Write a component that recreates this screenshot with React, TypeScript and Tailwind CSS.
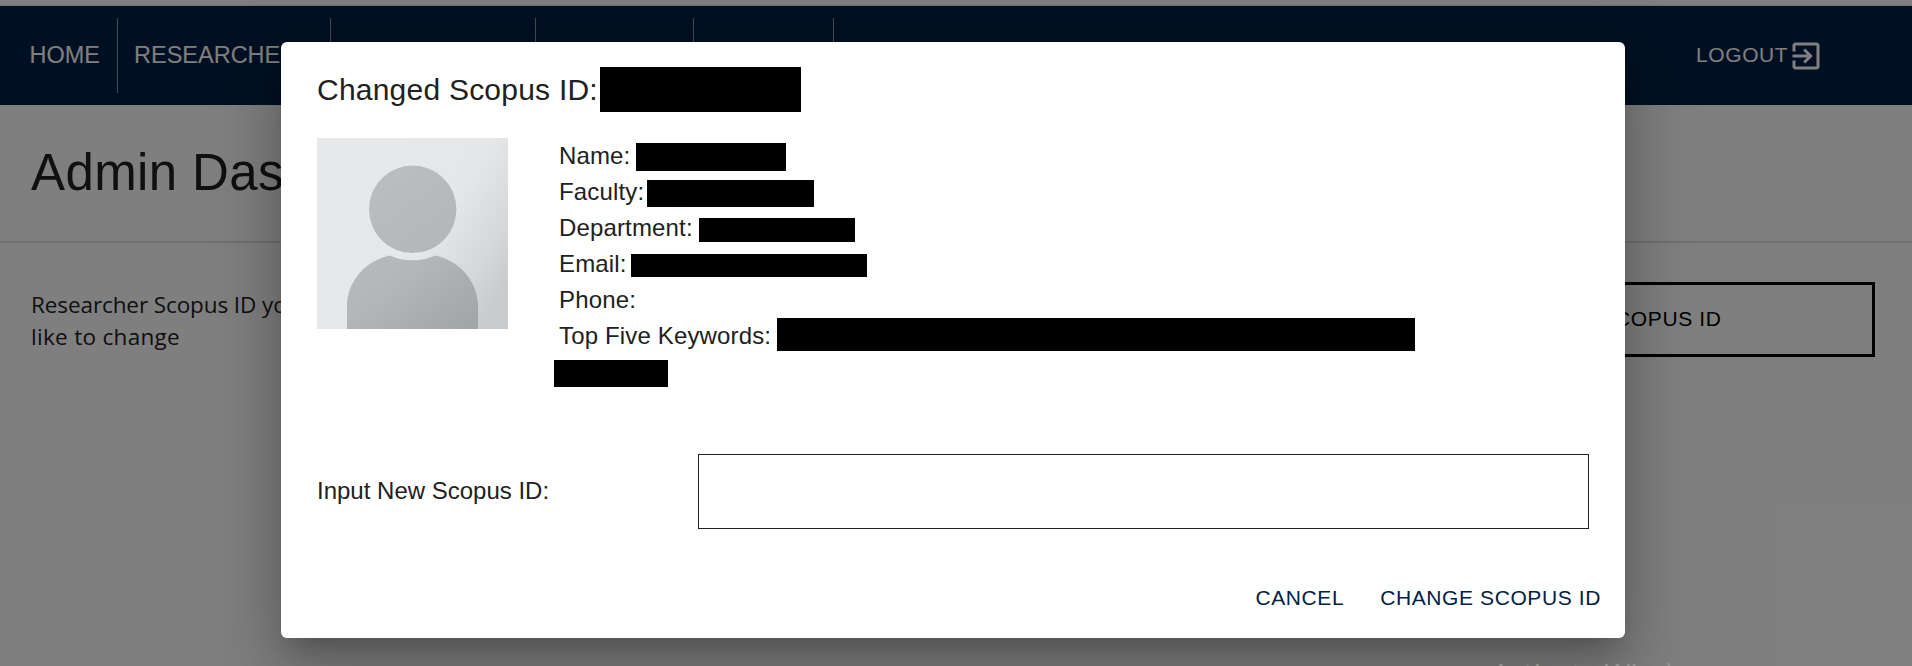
import React from "react";

const details = [
  { label: "Name:", bar: "ml-[77px] mt-[5px] h-7 w-[150px]" },
  { label: "Faculty:", bar: "ml-[88px] mt-[6px] h-[27px] w-[167px]" },
  { label: "Department:", bar: "ml-[140px] mt-2 h-6 w-[156px]" },
  { label: "Email:", bar: "ml-[72px] mt-2 h-[23px] w-[236px]" },
  { label: "Phone:", bar: "hidden" },
  { label: "Top Five Keywords:", bar: "ml-[218px] h-[33px] w-[638px]" },
  { label: "", bar: "-ml-[5px] mt-[6px] h-[27px] w-[114px]" },
];

function Avatar() {
  return (
    <svg width="191" height="191" viewBox="0 0 191 191" className="block shrink-0">
      <defs>
        <linearGradient id="bg" gradientUnits="userSpaceOnUse" x1="60" y1="40" x2="200" y2="130">
          <stop offset="0" stopColor="#e7e8ea" />
          <stop offset="0.45" stopColor="#e6e7e9" />
          <stop offset="0.8" stopColor="#d6d7d9" />
          <stop offset="1" stopColor="#cacbcc" />
        </linearGradient>
        <linearGradient id="fg" gradientUnits="userSpaceOnUse" x1="40" y1="30" x2="155" y2="180">
          <stop offset="0" stopColor="#bdbec2" />
          <stop offset="0.6" stopColor="#b5b6b9" />
          <stop offset="1" stopColor="#a2a7aa" />
        </linearGradient>
      </defs>
      <rect width="191" height="191" fill="url(#bg)" />
      <circle cx="95.7" cy="71.3" r="43.7" fill="url(#fg)" />
      <path d="M30 191V168C30 144 48 123 72.5 117.5Q95.500 127.200 118.500 117.500C143 123 161 144 161 168V191Z" fill="url(#fg)" />
    </svg>
  );
}

function Divider() {
  return <span className="h-[75px] w-px bg-[#8f99a5]" />;
}

export default function App() {
  return (
    <div className="relative h-[666px] w-full overflow-hidden bg-white font-['Liberation_Sans',Arial,sans-serif] text-[#212121]">
      <header className="mt-[5px] flex h-[100px] items-center border-t border-[#dfe5e5] bg-[#002145] text-2xl text-white">
        <span className="w-[117px] pl-[29.500px] text-[23.5px]">HOME</span>
        <Divider />
        <span className="w-[212px] pl-[16px] text-[23.5px]">RESEARCHERS</span>
        <Divider />
        <span className="w-[204px]" />
        <Divider />
        <span className="w-[157px]" />
        <Divider />
        <span className="w-[139px]" />
        <Divider />
        <div className="ml-auto flex w-[216px] items-center text-[21px] tracking-[0.6px]">
          <span className="pb-[2px]">LOGOUT</span>
          <svg viewBox="0 0 24 24" className="size-9 fill-white" aria-hidden="true">
            <path d="M10.090 15.590 11.500 17l5-5-5-5-1.410 1.410L12.670 11H3v2h9.670zM19 3H5c-1.110 0-2 .9-2 2v4h2V5h14v14H5v-4H3v4c0 1.100.89 2 2 2h14c1.100 0 2-.9 2-2V5c0-1.100-.9-2-2-2" />
          </svg>
        </div>
      </header>
      <section className="flex h-[138px] items-center border-b-2 border-[#dedede] pb-[2px] pl-[31px]">
        <h1 className="text-[51px] leading-[63px] tracking-[0.375px]">Admin Dashboard</h1>
      </section>
      <section className="flex justify-between pt-[39px] pr-[37px] pl-[31px]">
        <p className="mt-[7px] w-[390px] font-['Open_Sans','Noto_Sans',sans-serif] text-[22.5px] leading-8 tracking-[-0.100px]">
          Researcher Scopus ID you would
          <br />
          <span className="tracking-[0.300px]">like to change</span>
        </p>
        <button className="h-[75px] w-[530px] border-[3px] border-black pb-[2px] pl-[2px] text-[21px] tracking-[0.6px] text-black">
          CHANGE SCOPUS ID
        </button>
      </section>

      <div className="absolute inset-0 flex justify-center bg-black/50 pr-[6px]">
        <div
          role="dialog"
          className="mt-[42px] flex h-[596px] w-[1344px] flex-col rounded-md bg-white pr-9 pl-9 shadow-[0_16.5px_22.5px_-10.5px_rgba(0,0,0,0.2),0_36px_57px_4.5px_rgba(0,0,0,0.14),0_13.5px_69px_12px_rgba(0,0,0,0.12)]"
        >
          <div className="flex h-24 items-start pt-6">
            <h2 className="w-[283px] pt-px text-[30px] leading-[45px] tracking-[0.225px] whitespace-nowrap">Changed Scopus ID:</h2>
            <span className="mt-px h-[45px] w-[201px] bg-black" />
          </div>
          <div className="flex h-[316px] gap-[51px]">
            <Avatar />
            <ul className="text-2xl leading-9 tracking-[0.150px]">
              {details.map((d, i) => (
                <li key={i} className="grid h-9 grid-cols-1 items-start">
                  <span className="col-start-1 row-start-1 whitespace-nowrap">{d.label}</span>
                  <span className={`col-start-1 row-start-1 bg-black ${d.bar}`} />
                </li>
              ))}
            </ul>
          </div>
          <div className="flex h-[75px] items-center justify-between">
            <label htmlFor="scopus" className="pb-[2px] text-2xl">Input New Scopus ID:</label>
            <input id="scopus" className="h-[75px] w-[891px] border border-[#212121]" />
          </div>
          <div className="-mr-3 mt-[53px] flex justify-end gap-9 text-[21px] leading-8 tracking-[0.6px] text-[#002145]">
            <button>CANCEL</button>
            <button>CHANGE SCOPUS ID</button>
          </div>
        </div>
      </div>
      <div className="absolute top-[657px] left-[1492px] font-['Open_Sans',sans-serif] text-[28px] leading-[32px] tracking-[0.200px] whitespace-nowrap text-[#929292]">
        Activate Windows
      </div>
    </div>
  );
}
